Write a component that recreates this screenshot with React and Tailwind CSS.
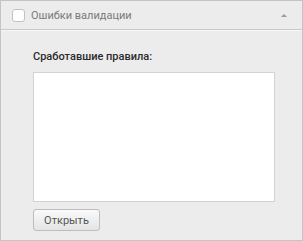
const App = () => {
  return (
    <div
      className="w-[303px] h-[241px] border border-[#c4c4c4] bg-[#ececed] flex flex-col"
      style={{ fontFamily: 'Roboto, "Noto Sans", sans-serif' }}
    >
      {/* Header */}
      <div className="h-[29px] shrink-0 flex items-center border-b border-[#c9c9c9] shadow-[0_1px_0_#f7f7f7] pl-[11px] pr-[15px]">
        <span className="w-[13px] h-[13px] rounded-[3px] border border-[#c2c2c2] bg-white shrink-0" />
        <span className="ml-[6px] text-[11px] text-[#7a7a7a] leading-none">
          Ошибки валидации
        </span>
        <span className="ml-auto w-0 h-0 border-l-[3px] border-r-[3px] border-b-[3px] border-l-transparent border-r-transparent border-b-[#9a9a9a]" />
      </div>

      {/* Body */}
      <div className="flex flex-col pl-[32px] pt-[20px]">
        <div className="text-[11px] font-medium text-[#2b2b2b] leading-[14px]">
          Сработавшие правила:
        </div>
        <div className="mt-[8px] w-[242px] h-[130px] bg-white border border-[#d0d3d6]" />
        <button className="mt-[7px] w-[67px] h-[22px] rounded-[3px] border border-[#bdbdbd] bg-gradient-to-b from-[#fafafa] to-[#e4e4e4] text-[11px] text-[#555] leading-none">
          Открыть
        </button>
      </div>
    </div>
  );
};

export default App;
